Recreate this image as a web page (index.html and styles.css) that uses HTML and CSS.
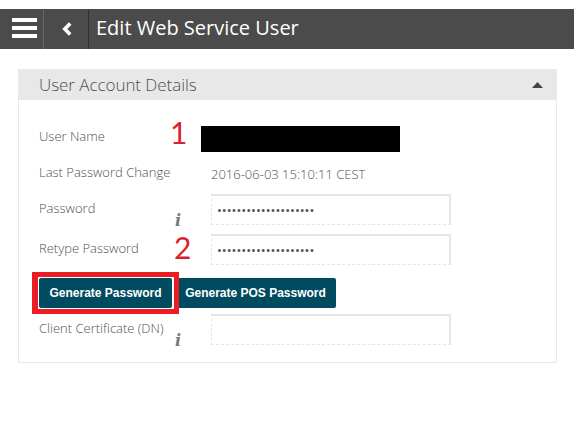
FILE: index.html
```html
<!DOCTYPE html>
<html lang="en">
<head>
<meta charset="utf-8">
<title>Edit Web Service User</title>
<link rel="stylesheet" href="styles.css">
</head>
<body>
<header class="topbar">
  <button class="menu" aria-label="Menu"><span></span><span></span><span></span></button>
  <button class="back" aria-label="Back"><svg width="10" height="14" viewBox="0 0 10 14"><path d="M8.2 1.4 2.8 7l5.4 5.6" fill="none" stroke="#fff" stroke-width="3.6"/></svg></button>
  <h1>Edit Web Service User</h1>
</header>
<section class="panel">
  <div class="panel-head">
    <h2>User Account Details</h2>
    <svg width="11" height="6" viewBox="0 0 11 6"><path d="M0 6 5.5 0 11 6z" fill="#444"/></svg>
  </div>
  <div class="panel-body">
    <div class="row row-name">
      <label>User Name</label>
      <span class="step step-one">1</span>
      <div class="redacted"></div>
    </div>
    <div class="row row-date">
      <label>Last Password Change</label>
      <span class="value">2016-06-03 15:10:11 CEST</span>
    </div>
    <div class="row">
      <label>Password</label>
      <i class="info">i</i>
      <div class="field">••••••••••••••••••••</div>
    </div>
    <div class="row">
      <label>Retype Password</label>
      <span class="step step-two">2</span>
      <div class="field">••••••••••••••••••••</div>
    </div>
    <div class="row actions">
      <button class="btn">Generate Password</button>
      <button class="btn btn-pos">Generate POS Password</button>
      <span class="highlight"></span>
    </div>
    <div class="row">
      <label>Client Certificate (DN)</label>
      <i class="info">i</i>
      <div class="field"></div>
    </div>
  </div>
</section>
</body>
</html>
```
FILE: styles.css
```css
* { box-sizing: border-box; }
body {
  margin: 0;
  padding-top: 9px;
  background: #fff;
  font-family: "Open Sans", sans-serif;
  font-weight: 300;
  font-size: 13px;
  color: #505050;
}
button { border: 0; margin: 0; padding: 0; background: none; }
.topbar {
  display: flex;
  align-items: center;
  height: 40px;
  background: #4b4b4b;
}
.menu {
  display: flex;
  flex-direction: column;
  gap: 4px;
  width: 43px;
  padding: 0 0 2px 12px;
}
.menu span { width: 25px; height: 4px; background: #fff; }
.back {
  display: flex;
  align-items: center;
  justify-content: center;
  width: 46px;
  height: 39px;
  padding-left: 1px;
  border-left: 1px solid #666;
  border-right: 1px solid #303030;
}
.topbar h1 {
  margin: 0 0 0 7px;
  font-size: 20px;
  font-weight: 400;
  line-height: 38px;
  height: 40px;
  color: #fff;
}
.panel {
  width: 539px;
  height: 294px;
  margin: 20px 0 0 18px;
  border: 1px solid #e8e8e8;
  border-top: 0;
}
.panel-head {
  display: flex;
  align-items: center;
  justify-content: space-between;
  height: 31px;
  padding: 0 13px 0 20px;
  background: #e8e8e8;
}
.panel-head h2 {
  margin: 0;
  font-size: 17px;
  font-weight: 300;
  letter-spacing: -0.05px;
  line-height: 31px;
}
.panel-body { padding: 18px 0 0 20px; }
.row {
  position: relative;
  display: grid;
  grid-template-columns: 172px 240px;
  align-items: center;
  height: 40px;
}
.row label { grid-column: 1; line-height: 18px; padding-bottom: 2px; }
.row-name { height: 36px; }
.row-date { height: 35px; }
.row-name label, .row-date label { padding-bottom: 0; }
.value { padding-top: 4px; }
.redacted {
  width: 199px;
  height: 26px;
  margin: 6px 0 0 -10px;
  background: #000;
}
.field {
  grid-column: 2;
  height: 31px;
  padding: 0 5px;
  line-height: 29px;
  font-weight: 400;
  letter-spacing: -0.02px;
  border: 1px dashed #e6e6e6;
  border-top: 2px solid #e6e6e6;
  border-right: 2px solid #e6e6e6;
}
.info {
  position: absolute;
  left: 136px;
  top: 24px;
  font: italic bold 16px/16px "DejaVu Serif", serif;
  color: #777;
}
.step {
  position: absolute;
  font: 400 30px/22px Lato, sans-serif;
  color: #dc1f2e;
}
.step-one { left: 131px; top: 3px; }
.step-two { left: 135px; top: 7px; }
.row.actions {
  display: flex;
  align-items: flex-end;
  gap: 3px;
  padding-bottom: 1px;
}
.btn {
  width: 133px;
  height: 30px;
  border-radius: 2px;
  background: #004b60;
  color: #fff;
  font: bold 12px/30px "Liberation Sans", sans-serif;
}
.btn-pos { width: 161px; }
.highlight {
  position: absolute;
  left: -7px;
  top: 3px;
  width: 147px;
  height: 42px;
  border: solid #ed1c24;
  border-width: 5px 5px 5px 6px;
}
```
